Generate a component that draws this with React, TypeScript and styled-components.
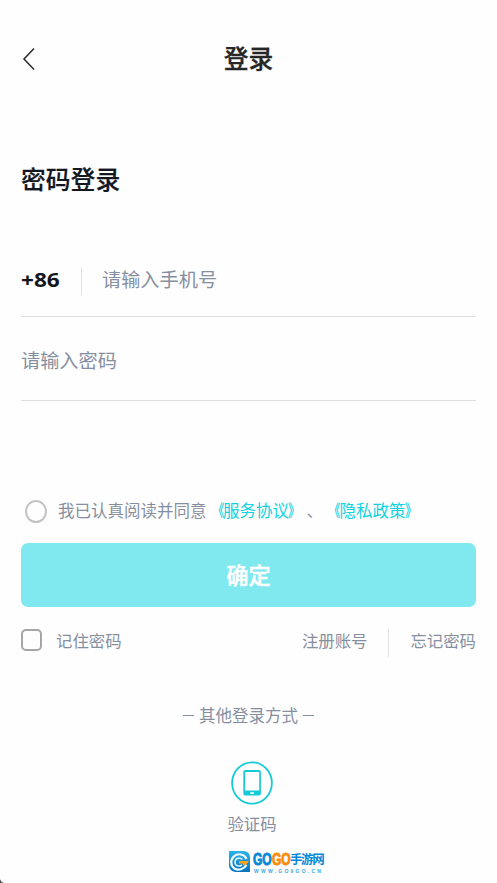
import React from 'react';
import styled, { createGlobalStyle } from 'styled-components';

const GlobalStyle = createGlobalStyle`
  * { box-sizing: border-box; }
  body {
    margin: 0;
    background: #fefefe;
    font-family: "Noto Sans CJK SC", sans-serif;
    text-spacing-trim: space-all;
  }
  button, input { font: inherit; color: inherit; border: 0; padding: 0; background: none; }
`;

const Page = styled.main`
  width: 497px;
  height: 883px;
  padding: 0 21px;
  display: flex;
  flex-direction: column;
  overflow: hidden;
`;

const Header = styled.header`
  display: grid;
  grid-template-columns: 60px 1fr 60px;
  align-items: center;
  height: 60px;
  margin-top: 28px;
`;

const BackButton = styled.button`
  display: flex;
  height: 26px;
  margin-top: 2px;
`;

const Title = styled.h1`
  margin: 0 0 2px;
  text-align: center;
  font-size: 24.8px;
  line-height: 36px;
  font-weight: 500;
  color: #262626;
  -webkit-text-stroke: 0.3px #262626;
`;

const Heading = styled.h2`
  margin: 72px 0 0;
  height: 37px;
  font-size: 24.8px;
  line-height: 36px;
  font-weight: 500;
  color: #14171f;
  -webkit-text-stroke: 0.2px #14171f;
`;

const Field = styled.div<{ $height: number; $gap?: number; $shift?: number }>`
  display: flex;
  align-items: center;
  height: ${(p) => p.$height}px;
  margin-top: ${(p) => p.$gap ?? 0}px;
  padding-top: ${(p) => p.$shift ?? 0}px;
  border-bottom: 1px solid #dedfe0;
`;

const CountryCode = styled.span`
  width: 60px;
  font: 700 20px/28px "Noto Sans", sans-serif;
  color: #14171f;
  transform: scaleX(1.13);
  transform-origin: left;
`;

const Divider = styled.span<{ $margin: string }>`
  width: 1px;
  height: 28px;
  margin: ${(p) => p.$margin};
  background: #e0e1e4;
`;

const Input = styled.input`
  flex: 1;
  min-width: 0;
  height: 30px;
  margin-bottom: 2px;
  font-size: 19.2px;
  line-height: 30px;
  outline: 0;
  &::placeholder { color: #868fa0; opacity: 1; }
`;

const Agreement = styled.div`
  display: flex;
  align-items: center;
  height: 26px;
  margin-top: 97px;
  padding-left: 4px;
  font-size: 16.5px;
  line-height: 24px;
  white-space: nowrap;
  color: #868fa0;
`;

const AgreementText = styled.span`
  margin-bottom: 2px;
`;

const Radio = styled.span`
  width: 22px;
  height: 23px;
  margin: 1px 11px 0 0;
  border: 2px solid #c3c3c3;
  border-radius: 50%;
`;

const Link = styled.span`
  margin-right: 1px;
  color: #0fd3df;
`;

const Bracket = styled.span<{ $side: 'left' | 'right' }>`
  display: inline-block;
  transform: translateX(${(p) => (p.$side === 'left' ? 1 : -1)}px) scaleX(0.72);
  transform-origin: ${(p) => (p.$side === 'left' ? 'right' : 'left')};
  -webkit-text-stroke: 0.25px #0fd3df;
`;

const Submit = styled.button`
  height: 64px;
  margin-top: 19px;
  padding-bottom: 2px;
  border-radius: 7px;
  background: #80e9ef;
  color: #fff;
  font-size: 22.2px;
  line-height: 62px;
  font-weight: 500;
  -webkit-text-stroke: 0.45px #fff;
`;

const Options = styled.div`
  display: flex;
  align-items: center;
  height: 28px;
  margin-top: 22px;
  font-size: 16.4px;
  line-height: 24px;
  color: #868fa0;
`;

const OptionLabel = styled.span`
  margin-bottom: 6px;
`;

const Checkbox = styled.span`
  width: 21px;
  height: 22px;
  margin: -6px 14px 0 0;
  border: 2px solid #a6a6a6;
  border-radius: 5px;
`;

const Spacer = styled.span`
  flex: 1;
`;

const OtherTitle = styled.div`
  display: flex;
  justify-content: center;
  align-items: center;
  gap: 5px;
  height: 24px;
  margin-top: 46px;
  font-size: 16.5px;
  line-height: 24px;
  color: #868fa0;
`;

const Dash = styled.span`
  width: 11px;
  height: 1px;
  background: #868fa0;
`;

const CodeLogin = styled.button`
  display: flex;
  flex-direction: column;
  align-items: center;
  align-self: center;
  margin: 34px 0 0 7px;
  font-size: 16.4px;
  line-height: 24px;
  color: #868fa0;
`;

const CodeLabel = styled.span`
  margin-top: 6px;
`;

const Brand = styled.footer`
  display: flex;
  align-items: center;
  gap: 2px;
  height: 24px;
  margin: 15px 0 0 207px;
`;

const BrandText = styled.div`
  display: flex;
  flex-direction: column;
`;

const BrandName = styled.div`
  display: flex;
  align-items: center;
  height: 17px;
  white-space: nowrap;
`;

const Word = styled.span<{ $color: string }>`
  width: 19px;
  font: 700 16.5px/16px "Liberation Sans", sans-serif;
  color: ${(p) => p.$color};
  -webkit-text-stroke: 0.9px ${(p) => p.$color};
  transform: scaleX(0.73);
  transform-origin: left;
`;

const BrandChinese = styled.span`
  font-size: 12.5px;
  line-height: 16px;
  font-weight: 700;
  letter-spacing: -1.4px;
  margin-left: -1px;
  color: #0788d6;
`;

const BrandUrl = styled.span`
  height: 6px;
  padding-left: 1px;
  font: 700 5px/6px "Liberation Sans", sans-serif;
  letter-spacing: 2.25px;
  white-space: nowrap;
  color: #36a8e2;
`;

const Corner = styled.svg`
  position: fixed;
  left: 0;
  bottom: 0;
`;

const BackIcon = () => (
  <svg width="16" height="26" viewBox="0 0 16 26" fill="none">
    <path d="M13 2.5 3 13l10 10.5" stroke="#292929" strokeWidth="1.5" />
  </svg>
);

const PhoneIcon = () => (
  <svg width="42" height="44" viewBox="0 0 42 44" fill="none">
    <ellipse cx="21" cy="22" rx="19.9" ry="20.7" stroke="#13cbd6" strokeWidth="1.8" />
    <rect x="12.3" y="9" width="17.6" height="25.5" rx="2" fill="#13cbd6" />
    <rect x="14" y="11" width="14.2" height="18.5" fill="#fefefe" />
    <rect x="19.2" y="31.3" width="3.8" height="1.6" rx=".7" fill="#fefefe" />
  </svg>
);

const BrandIcon = () => (
  <svg width="23" height="22" viewBox="0 0 23 22" fill="none">
    <defs>
      <linearGradient id="brandBlue" x1="0" y1="0" x2="0" y2="1">
        <stop stopColor="#27b4ed" />
        <stop offset="1" stopColor="#0673bd" />
      </linearGradient>
    </defs>
    <path d="M1 0h14c5 0 7 3 7 7v14H8c-4 0-7-3-7-7z" fill="url(#brandBlue)" />
    <path d="M18.5 8C16.5 3 10 1.8 6 5.3S2.5 15 6.5 17.5 16 18 18.5 14" stroke="#f4fbff" strokeWidth="2.2" />
    <path d="M14.5 8.5C11 5.5 6.8 8 7 11.5S11 16 14 14" stroke="#d7f2ff" strokeWidth="1.6" />
    <path d="M11 10h10l-3 4h-3l-.5-1.5H11z" fill="#ffa11c" />
  </svg>
);

const PolicyLink = ({ children }: { children: React.ReactNode }) => (
  <Link>
    <Bracket $side="left">《</Bracket>
    {children}
    <Bracket $side="right">》</Bracket>
  </Link>
);

export default function App() {
  return (
    <>
      <GlobalStyle />
      <Page>
        <Header>
          <BackButton aria-label="返回"><BackIcon /></BackButton>
          <Title>登录</Title>
        </Header>
        <Heading>密码登录</Heading>
        <Field $height={74} $gap={46}>
          <CountryCode>+86</CountryCode>
          <Divider $margin="2px 20px 0 0" />
          <Input placeholder="请输入手机号" />
        </Field>
        <Field $height={84} $shift={4}>
          <Input placeholder="请输入密码" />
        </Field>
        <Agreement>
          <Radio />
          <AgreementText>
            我已认真阅读并同意<PolicyLink>服务协议</PolicyLink>、<PolicyLink>隐私政策</PolicyLink>
          </AgreementText>
        </Agreement>
        <Submit>确定</Submit>
        <Options>
          <Checkbox />
          <OptionLabel>记住密码</OptionLabel>
          <Spacer />
          <OptionLabel>注册账号</OptionLabel>
          <Divider $margin="0 21px" />
          <OptionLabel>忘记密码</OptionLabel>
        </Options>
        <OtherTitle><Dash />其他登录方式<Dash /></OtherTitle>
        <CodeLogin>
          <PhoneIcon />
          <CodeLabel>验证码</CodeLabel>
        </CodeLogin>
        <Brand>
          <BrandIcon />
          <BrandText>
            <BrandName>
              <Word $color="#0788d6">GO</Word>
              <Word $color="#f98b08">GO</Word>
              <BrandChinese>手游网</BrandChinese>
            </BrandName>
            <BrandUrl>WWW.GO9GO.CN</BrandUrl>
          </BrandText>
        </Brand>
      </Page>
      <Corner width="5" height="5" viewBox="0 0 5 5">
        <path d="M0 1.2Q1 4 4 5H0z" fill="#555" />
      </Corner>
    </>
  );
}
